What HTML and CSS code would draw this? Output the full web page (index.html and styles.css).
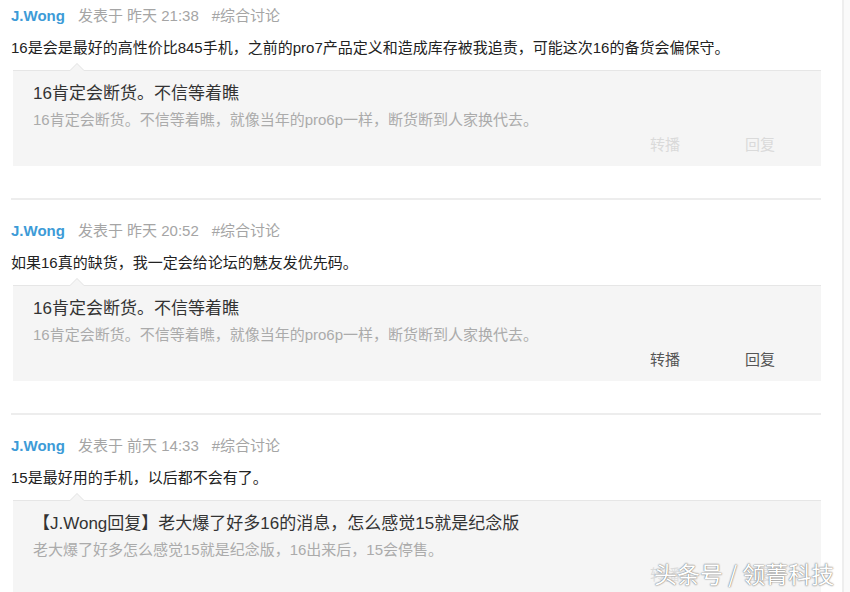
FILE: index.html
```html
<!DOCTYPE html>
<html lang="zh-CN">
<head>
  <meta charset="UTF-8" />
  <meta name="viewport" content="width=device-width, initial-scale=1.0" />
  <title>J.Wong 的动态</title>
  <link rel="stylesheet" href="styles.css">
</head>
<body>
  <div class="feed">
    <div class="post">
      <div class="post-head">
        <a class="author" href="#">J.Wong</a>
        <span class="meta">发表于 昨天 21:38</span>
        <span class="meta">#综合讨论</span>
      </div>
      <p class="post-text">16是会是最好的高性价比845手机，之前的pro7产品定义和造成库存被我追责，可能这次16的备货会偏保守。</p>
      <div class="quote">
        <div class="quote-title">16肯定会断货。不信等着瞧</div>
        <div class="quote-text">16肯定会断货。不信等着瞧，就像当年的pro6p一样，断货断到人家换代去。</div>
        <div class="actions faded">
          <span>转播</span>
          <span>回复</span>
        </div>
      </div>
    </div>

    <div class="post">
      <div class="post-head">
        <a class="author" href="#">J.Wong</a>
        <span class="meta">发表于 昨天 20:52</span>
        <span class="meta">#综合讨论</span>
      </div>
      <p class="post-text">如果16真的缺货，我一定会给论坛的魅友发优先码。</p>
      <div class="quote">
        <div class="quote-title">16肯定会断货。不信等着瞧</div>
        <div class="quote-text">16肯定会断货。不信等着瞧，就像当年的pro6p一样，断货断到人家换代去。</div>
        <div class="actions">
          <span>转播</span>
          <span>回复</span>
        </div>
      </div>
    </div>

    <div class="post">
      <div class="post-head">
        <a class="author" href="#">J.Wong</a>
        <span class="meta">发表于 前天 14:33</span>
        <span class="meta">#综合讨论</span>
      </div>
      <p class="post-text">15是最好用的手机，以后都不会有了。</p>
      <div class="quote">
        <div class="quote-title">【J.Wong回复】老大爆了好多16的消息，怎么感觉15就是纪念版</div>
        <div class="quote-text">老大爆了好多怎么感觉15就是纪念版，16出来后，15会停售。</div>
        <div class="actions faded">
          <span>转播</span>
          <span>回复</span>
        </div>
      </div>
    </div>
  </div>
  <div class="rail"></div>

  <div class="watermark">头条号 / 领菁科技</div>
</body>
</html>
```

FILE: styles.css
```css
body {
  margin: 0;
  display: flex;
  height: 592px;
  overflow: hidden;
  background: #fff;
  font-family: "Liberation Sans", "Noto Sans CJK SC", sans-serif;
  font-size: 15px;
  color: #333;
}

.feed {
  width: 810px;
  padding: 0 21px 0 11px;
  flex-shrink: 0;
}

.rail {
  flex: 1;
  border-left: 2px solid #eeeeee;
  background: #fafafa;
}

.post {
  padding: 21px 0 32px;
  border-bottom: 2px solid #ededed;
}

.post:first-child {
  padding-top: 6px;
}

.post-head {
  display: flex;
  gap: 13px;
  line-height: 20px;
}

.author {
  color: #3d9bd7;
  font-weight: bold;
  text-decoration: none;
}

.meta {
  color: #a5a5a5;
}

.post-text {
  margin: 12px 0 0;
  line-height: 20px;
  color: #222;
}

.quote {
  position: relative;
  margin: 12px 0 0 2px;
  padding: 12px 46px 11px 20px;
  background: #f5f5f5;
  border-top: 1px solid #e6e6e6;
}

/* стрелочка над цитатой */
.quote::before,
.quote::after {
  content: "";
  position: absolute;
  left: 57px;
  border: 7px solid transparent;
  border-top: 0;
}

.quote::before {
  top: -8px;
  border-bottom: 7px solid #e2e2e2;
}

.quote::after {
  top: -7px;
  border-bottom: 7px solid #f5f5f5;
}

.quote-title {
  font-size: 17px;
  line-height: 22px;
  color: #333;
}

.quote-text {
  margin-top: 5px;
  line-height: 20px;
  color: #ababab;
}

.actions {
  display: flex;
  justify-content: flex-end;
  gap: 65px;
  margin-top: 5px;
  line-height: 20px;
  color: #555;
}

.actions.faded {
  color: #dadada;
}

.watermark {
  position: absolute;
  left: 654px;
  top: 558px;
  font-family: "Noto Sans CJK SC", sans-serif;
  font-size: 23px;
  line-height: 30px;
  color: #fff;
  text-shadow: 0 0 1px #666, 0 0 2px #888, 0 0 6px rgba(255, 255, 255, 0.9);
}
```
